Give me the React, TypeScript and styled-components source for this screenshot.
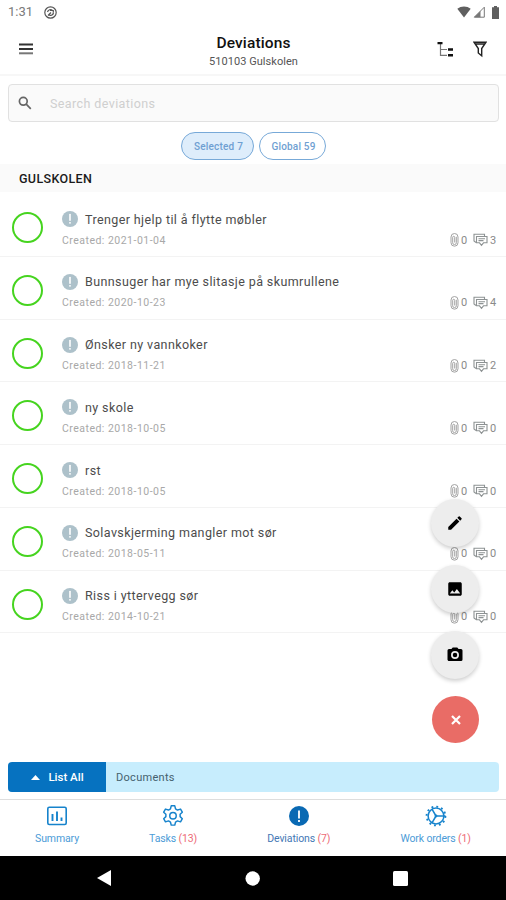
import React from "react";
import styled, { createGlobalStyle } from "styled-components";

const GlobalStyle = createGlobalStyle`
  * { box-sizing: border-box; }
  body { margin: 0; background: #fff; font-family: Roboto, "Liberation Sans", sans-serif; }
  button { font-family: inherit; border: 0; padding: 0; background: none; }
  svg { display: block; flex: none; }
`;

const Screen = styled.main`
  position: relative;
  width: 506px;
  height: 900px;
  display: flex;
  flex-direction: column;
  overflow: hidden;
  background: #fff;
`;

const StatusBar = styled.div`
  height: 24px;
  display: flex;
  align-items: center;
  justify-content: space-between;
  padding: 0 5px 0 8px;
  color: #6d6d6d;
`;

const StatusGroup = styled.div<{ $gap: number }>`
  display: flex;
  align-items: center;
  gap: ${(p) => p.$gap}px;
`;

const Clock = styled.span`
  width: 25px;
  font-size: 13px;
  line-height: 24px;
  color: #7b7b7b;
  white-space: nowrap;
`;

const Header = styled.header`
  height: 52px;
  display: grid;
  grid-template-columns: 81px 1fr 80px;
  border-bottom: 2px solid #f7f7f7;
`;

const MenuButton = styled.button`
  display: flex;
  padding: 19px 0 0 19px;
`;

const HeaderTitle = styled.div`
  text-align: center;
  padding-top: 9px;
`;

const Title = styled.h1`
  margin: 0;
  font-size: 15.5px;
  line-height: 20px;
  font-weight: 500;
  letter-spacing: 0.12px;
  color: #111;
`;

const Subtitle = styled.div`
  font-size: 11px;
  line-height: 17px;
  letter-spacing: 0.04px;
  color: #555;
`;

const HeaderActions = styled.div`
  display: flex;
  gap: 19px;
  padding: 17px 0 0 11px;
`;

const SearchBox = styled.div`
  height: 38px;
  margin: 8px 7px 0 8px;
  display: flex;
  align-items: center;
  gap: 17px;
  padding-left: 8px;
  border: 1px solid #e1e1e1;
  border-radius: 4px;
  background: #fafafa;
  font-size: 12.5px;
  letter-spacing: 0.4px;
  color: #cfcfcf;
`;

const Pills = styled.div`
  display: flex;
  justify-content: center;
  gap: 5px;
  padding: 10px 0 4px 1px;
`;

const Pill = styled.button<{ $active?: boolean; $width: number }>`
  width: ${(p) => p.$width}px;
  height: 28px;
  padding-left: 2px;
  border: 1px solid #77a9d8;
  border-radius: 14px;
  background: ${(p) => (p.$active ? "#deedfb" : "#fff")};
  font-size: 10px;
  font-weight: 500;
  letter-spacing: 0.2px;
  color: #6f9fd2;
`;

const SectionHeading = styled.h2`
  margin: 0;
  height: 28px;
  padding-left: 19px;
  background: #fafafa;
  font-size: 12.5px;
  line-height: 30px;
  font-weight: 500;
  letter-spacing: 0.35px;
  color: #1a1a1a;
`;

const List = styled.ul`
  flex: 1;
  margin: 0;
  padding: 2px 0 0;
  list-style: none;
`;

const Row = styled.li`
  height: 62.75px;
  display: flex;
  align-items: flex-start;
  padding: 0 9px 0 12px;
  border-bottom: 1.5px solid #f3f3f3;
`;

const Ring = styled.span`
  flex: none;
  width: 31px;
  height: 31px;
  margin: 18px 19px 0 0;
  border: 2px solid #46d41f;
  border-radius: 50%;
`;

const RowBody = styled.div`
  flex: 1;
  padding-top: 15px;
`;

const RowTitle = styled.div`
  display: flex;
  align-items: center;
  gap: 7px;
  height: 20px;
  font-size: 12.5px;
  letter-spacing: 0.4px;
  color: #4c4c4c;
`;

const Meta = styled.div`
  display: flex;
  align-items: center;
  justify-content: space-between;
  height: 20px;
  margin-top: 1px;
  font-size: 10.5px;
  letter-spacing: 0.48px;
  color: #a8a8a8;
`;

const Counts = styled.div`
  display: flex;
  align-items: center;
  font-size: 11px;
  letter-spacing: 0;
  color: #8a8a8a;
`;

const Count = styled.span`
  width: 7px;
  margin-left: 2px;
  & + svg { margin-left: 5px; }
`;

const FabStack = styled.div`
  position: absolute;
  right: 27px;
  top: 499px;
  display: flex;
  flex-direction: column;
  align-items: flex-end;
  gap: 18px;
`;

const Fab = styled.button<{ $close?: boolean }>`
  width: ${(p) => (p.$close ? 47 : 48)}px;
  height: ${(p) => (p.$close ? 47 : 48)}px;
  display: flex;
  align-items: center;
  justify-content: center;
  border-radius: 50%;
  color: ${(p) => (p.$close ? "#fff" : "#000")};
  background: ${(p) => (p.$close ? "#e96c66" : "#ededed")};
  margin-top: ${(p) => (p.$close ? -1 : 0)}px;
  box-shadow: ${(p) => (p.$close ? "none" : "0 2px 4px rgba(0,0,0,.2)")};
`;

const DocumentBar = styled.div`
  height: 30px;
  margin: 0 7px 7px 8px;
  display: flex;
  overflow: hidden;
  border-radius: 4px;
  background: #c7edfd;
`;

const ListAll = styled.button`
  width: 98px;
  display: flex;
  align-items: center;
  justify-content: center;
  gap: 8px;
  padding-left: 1px;
  background: #0672c0;
  color: #fff;
  font-size: 11.5px;
  font-weight: 500;
`;

const Documents = styled.span`
  padding-left: 10px;
  font-size: 11px;
  line-height: 31px;
  letter-spacing: 0.3px;
  color: #45616e;
`;

const Tabs = styled.nav`
  height: 57px;
  display: flex;
  justify-content: space-around;
  border-top: 1.5px solid #dedede;
`;

const Tab = styled.button`
  display: flex;
  flex-direction: column;
  align-items: center;
  padding-top: 4.5px;
  color: #1683cc;
`;

const TabLabel = styled.span<{ $active?: boolean }>`
  margin-top: 4.5px;
  font-size: 10.5px;
  line-height: 16px;
  letter-spacing: -0.12px;
  white-space: nowrap;
  color: ${(p) => (p.$active ? "#4478b5" : "#4c9cd7")};
`;

const Alert = styled.span`
  color: #ed6b76;
`;

const NavBar = styled.div`
  height: 44px;
  display: flex;
  justify-content: space-between;
  align-items: center;
  padding: 0 98px 0 97px;
  background: #000;
`;

const PencilIcon = () => (
  <svg width="18" height="18" viewBox="0 0 24 24" fill="currentColor">
    <path d="M3 17.25V21h3.75L17.81 9.94l-3.75-3.75L3 17.25zM20.71 7.04a1 1 0 0 0 0-1.41l-2.34-2.34a1 1 0 0 0-1.41 0l-1.83 1.83 3.75 3.75 1.83-1.83z" />
  </svg>
);

const ImageIcon = () => (
  <svg width="18" height="18" viewBox="0 0 24 24" fill="currentColor">
    <path d="M21 19V5c0-1.100-.9-2-2-2H5c-1.100 0-2 .9-2 2v14c0 1.100.9 2 2 2h14c1.100 0 2-.9 2-2zM8.500 13.500l2.500 3.010L14.500 12l4.500 6H5l3.500-4.500z" />
  </svg>
);

const CameraIcon = () => (
  <svg width="18" height="18" viewBox="0 0 24 24" fill="currentColor">
    <path fillRule="evenodd" d="M9 2 7.200 4H4a2 2 0 0 0-2 2v12c0 1.100.9 2 2 2h16a2 2 0 0 0 2-2V6a2 2 0 0 0-2-2h-3.200L15 2zM12 6.700a5.300 5.300 0 1 1 0 10.600 5.300 5.300 0 0 1 0-10.600z" />
    <circle cx="12" cy="12" r="3" />
  </svg>
);

const CloseIcon = () => (
  <svg width="10" height="10" viewBox="0 0 10 10" stroke="currentColor" strokeWidth="2.200" fill="none">
    <path d="M1 1l8 8M9 1L1 9" />
  </svg>
);

const ExclamationIcon = ({ size, color }: { size: number; color: string }) => (
  <svg width={size} height={size} viewBox="0 0 20 20">
    <circle cx="10" cy="10" r="10" fill={color} />
    <path d="M10 4.500v7" stroke="#fff" strokeWidth="2" strokeLinecap="round" />
    <circle cx="10" cy="14.800" r="1.200" fill="#fff" />
  </svg>
);

const ClipIcon = () => (
  <svg width="9" height="14" viewBox="0 0 9 14" fill="none" stroke="#a3a3a3" strokeWidth="1">
    <path d="M6.300 3.800v6a1.800 1.800 0 0 1-3.600 0V4.300a1 1 0 0 1 2 0v5.200M1 4v5.700a3.500 3.500 0 0 0 7 0V4a3.500 3.500 0 0 0-7 0" />
  </svg>
);

const CommentsIcon = () => (
  <svg width="15" height="14" viewBox="0 0 15 14" fill="none" stroke="#8d9293" strokeWidth="1.100">
    <path d="M3 9.500 1 8V1.200h10.500v2" />
    <path d="M3.500 3.500h10.500v6.300h-3.500l-2 2.500-2-2.500h-3zM5.500 5.700h6.500M5.500 7.600h5" />
  </svg>
);

const SummaryIcon = () => (
  <svg width="22" height="22" viewBox="0 0 22 22" fill="none" stroke="currentColor" strokeWidth="1.600">
    <rect x="1.800" y="2.300" width="18.400" height="17.200" rx="1.500" />
    <path d="M6.500 9v7M11 6.500V16M15.500 12.500V16" strokeWidth="1.900" />
  </svg>
);

const CogIcon = () => (
  <svg width="24" height="22" viewBox="0 0 22 21" fill="none" stroke="currentColor" strokeWidth="1.400" strokeLinejoin="round">
    <path d="M8.600 3.700 9.300.8h3.400l.7 2.900 1.900 1.100 2.900-.9 1.700 3-2.100 2v2.200l2.100 2-1.700 3-2.900-.9-1.900 1.100-.7 2.900H9.300l-.7-2.900-1.900-1.100-2.900.9-1.700-3 2.100-2V8.900L2.100 6.900l1.700-3 2.900.9z" />
    <circle cx="11" cy="10.300" r="3.100" />
  </svg>
);

const GearWheelIcon = () => (
  <svg width="22" height="22" viewBox="0 0 22 22" fill="none" stroke="currentColor">
    <circle cx="11" cy="11" r="9.400" strokeWidth="1.900" strokeDasharray="1.900 3.022" />
    <circle cx="11" cy="11" r="7.900" strokeWidth="1.500" />
    <path d="M11 11h9.500M11 11 7 4.200M11 11l-4 6.800" strokeWidth="1.500" />
    <circle cx="11" cy="11" r="1.400" fill="currentColor" stroke="none" />
  </svg>
);

const items = [
  ["Trenger hjelp til å flytte møbler", "2021-01-04", 3],
  ["Bunnsuger har mye slitasje på skumrullene", "2020-10-23", 4],
  ["Ønsker ny vannkoker", "2018-11-21", 2],
  ["ny skole", "2018-10-05", 0],
  ["rst", "2018-10-05", 0],
  ["Solavskjerming mangler mot sør", "2018-05-11", 0],
  ["Riss i yttervegg sør", "2014-10-21", 0],
] as const;

export default function App() {
  return (
    <>
      <GlobalStyle />
      <Screen>
        <StatusBar>
          <StatusGroup $gap={11}>
            <Clock>1:31</Clock>
            <svg width="13" height="13" viewBox="0 0 13 13" fill="none" stroke="#555" strokeWidth="1.200">
              <circle cx="6.500" cy="6.500" r="5.700" />
              <path d="M3.500 6a3 3 0 0 1 5-1.500M9.500 7a3 3 0 0 1-5 1.500M6 4.500h3.300v2.300M4 9.500l3-3" />
            </svg>
          </StatusGroup>
          <StatusGroup $gap={2}>
            <svg width="14" height="12" viewBox="0 0 14 12" fill="#5f5f5f">
              <path d="M7 11.500.3 2.800a11 11 0 0 1 13.400 0z" />
            </svg>
            <svg width="12" height="12" viewBox="0 0 12 12">
              <path d="M11.300 1.200v10H1.300z" fill="none" stroke="#777" />
              <path d="M7.500 5v6.200H1.200z" fill="#777" />
            </svg>
            <svg width="14" height="13" viewBox="0 0 14 13" fill="#5f5f5f">
              <path d="M5 1.300h2V0h3v1.300h2V13H5z" />
            </svg>
          </StatusGroup>
        </StatusBar>
        <Header>
          <MenuButton aria-label="Menu">
            <svg width="14" height="12" viewBox="0 0 14 12">
              <path d="M0 1.500h14M0 6h14" stroke="#333" strokeWidth="2" />
              <path d="M0 10.300h14" stroke="#777" strokeWidth="2" />
            </svg>
          </MenuButton>
          <HeaderTitle>
            <Title>Deviations</Title>
            <Subtitle>510103 Gulskolen</Subtitle>
          </HeaderTitle>
          <HeaderActions>
            <svg width="17" height="17" viewBox="0 0 17 17">
              <path d="M3.500 3v11.300H10M3.500 8.500H10" fill="none" stroke="#777" strokeWidth="1.200" />
              <path d="M.5 1h5v2.200h-5zM11 7.200h5v2.600h-5zM11 13h5v2.600h-5z" fill="#111" />
            </svg>
            <svg width="14" height="17" viewBox="0 0 14 17" fill="none" stroke="#222" strokeWidth="1.400">
              <path d="M1 1.200h12L8.700 7.500v7.300L5.300 12V7.500zM2 3h10" />
            </svg>
          </HeaderActions>
        </Header>
        <SearchBox>
          <svg width="16" height="16" viewBox="0 0 16 16" fill="none" stroke="#666" strokeWidth="1.700">
            <circle cx="6.300" cy="6.300" r="3.900" />
            <path d="M9.200 9.200l4.600 4.600" />
          </svg>
          Search deviations
        </SearchBox>
        <Pills>
          <Pill $active $width={73}>Selected 7</Pill>
          <Pill $width={67}>Global 59</Pill>
        </Pills>
        <SectionHeading>GULSKOLEN</SectionHeading>
        <List>
          {items.map(([title, date, comments]) => (
            <Row key={title}>
              <Ring />
              <RowBody>
                <RowTitle>
                  <ExclamationIcon size={16} color="#adc1ca" />
                  {title}
                </RowTitle>
                <Meta>
                  Created: {date}
                  <Counts>
                    <ClipIcon />
                    <Count>0</Count>
                    <CommentsIcon />
                    <Count>{comments}</Count>
                  </Counts>
                </Meta>
              </RowBody>
            </Row>
          ))}
        </List>
        <DocumentBar>
          <ListAll>
            <svg width="9" height="5" viewBox="0 0 9 5" fill="#fff">
              <path d="M0 5 4.500 0 9 5z" />
            </svg>
            List All
          </ListAll>
          <Documents>Documents</Documents>
        </DocumentBar>
        <Tabs>
          <Tab>
            <SummaryIcon />
            <TabLabel>Summary</TabLabel>
          </Tab>
          <Tab>
            <CogIcon />
            <TabLabel>Tasks <Alert>(13)</Alert></TabLabel>
          </Tab>
          <Tab>
            <svg width="22" height="22" viewBox="0 0 22 22">
              <circle cx="11" cy="11" r="10" fill="#0969b3" />
              <path d="M11 5.500v8M11 15v2" stroke="#fff" strokeWidth="1.800" />
            </svg>
            <TabLabel $active>Deviations <Alert>(7)</Alert></TabLabel>
          </Tab>
          <Tab>
            <GearWheelIcon />
            <TabLabel>Work orders <Alert>(1)</Alert></TabLabel>
          </Tab>
        </Tabs>
        <NavBar>
          <svg width="14" height="16" viewBox="0 0 14 16" fill="#fff">
            <path d="M14 0v16L0 8z" />
          </svg>
          <svg width="16" height="15" viewBox="0 0 16 15" fill="#fff">
            <circle cx="8.700" cy="7.500" r="7.200" />
          </svg>
          <svg width="15" height="15" viewBox="0 0 15 15" fill="#fff">
            <rect width="15" height="15" rx="1.500" />
          </svg>
        </NavBar>
        <FabStack>
          <Fab aria-label="Edit"><PencilIcon /></Fab>
          <Fab aria-label="Picture"><ImageIcon /></Fab>
          <Fab aria-label="Camera"><CameraIcon /></Fab>
          <Fab $close aria-label="Close"><CloseIcon /></Fab>
        </FabStack>
      </Screen>
    </>
  );
}
